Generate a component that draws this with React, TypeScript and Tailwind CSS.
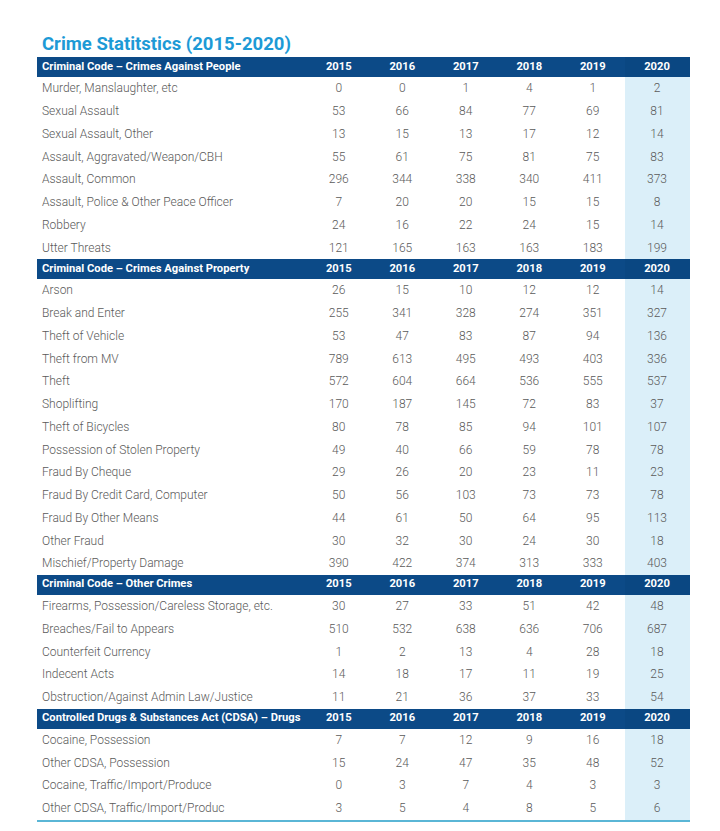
type Row = [string, number[]];
type Section = { title: string; rows: Row[] };

const years = [2015, 2016, 2017, 2018, 2019, 2020];

const sections: Section[] = [
  {
    title: "Criminal Code – Crimes Against People",
    rows: [
      ["Murder, Manslaughter, etc", [0, 0, 1, 4, 1, 2]],
      ["Sexual Assault", [53, 66, 84, 77, 69, 81]],
      ["Sexual Assault, Other", [13, 15, 13, 17, 12, 14]],
      ["Assault, Aggravated/Weapon/CBH", [55, 61, 75, 81, 75, 83]],
      ["Assault, Common", [296, 344, 338, 340, 411, 373]],
      ["Assault, Police & Other Peace Officer", [7, 20, 20, 15, 15, 8]],
      ["Robbery", [24, 16, 22, 24, 15, 14]],
      ["Utter Threats", [121, 165, 163, 163, 183, 199]],
    ],
  },
  {
    title: "Criminal Code – Crimes Against Property",
    rows: [
      ["Arson", [26, 15, 10, 12, 12, 14]],
      ["Break and Enter", [255, 341, 328, 274, 351, 327]],
      ["Theft of Vehicle", [53, 47, 83, 87, 94, 136]],
      ["Theft from MV", [789, 613, 495, 493, 403, 336]],
      ["Theft", [572, 604, 664, 536, 555, 537]],
      ["Shoplifting", [170, 187, 145, 72, 83, 37]],
      ["Theft of Bicycles", [80, 78, 85, 94, 101, 107]],
      ["Possession of Stolen Property", [49, 40, 66, 59, 78, 78]],
      ["Fraud By Cheque", [29, 26, 20, 23, 11, 23]],
      ["Fraud By Credit Card, Computer", [50, 56, 103, 73, 73, 78]],
      ["Fraud By Other Means", [44, 61, 50, 64, 95, 113]],
      ["Other Fraud", [30, 32, 30, 24, 30, 18]],
      ["Mischief/Property Damage", [390, 422, 374, 313, 333, 403]],
    ],
  },
  {
    title: "Criminal Code – Other Crimes",
    rows: [
      ["Firearms, Possession/Careless Storage, etc.", [30, 27, 33, 51, 42, 48]],
      ["Breaches/Fail to Appears", [510, 532, 638, 636, 706, 687]],
      ["Counterfeit Currency", [1, 2, 13, 4, 28, 18]],
      ["Indecent Acts", [14, 18, 17, 11, 19, 25]],
      ["Obstruction/Against Admin Law/Justice", [11, 21, 36, 37, 33, 54]],
    ],
  },
  {
    title: "Controlled Drugs & Substances Act (CDSA) – Drugs",
    rows: [
      ["Cocaine, Possession", [7, 7, 12, 9, 16, 18]],
      ["Other CDSA, Possession", [15, 24, 47, 35, 48, 52]],
      ["Cocaine, Traffic/Import/Produce", [0, 3, 7, 4, 3, 3]],
      ["Other CDSA, Traffic/Import/Produc", [3, 5, 4, 8, 5, 6]],
    ],
  },
];

// label column + six year columns
const grid = "grid grid-cols-[270px_63.5px_63.5px_63.5px_63.5px_63.5px_65px]";

function SectionBlock({ section }: { section: Section }) {
  return (
    <div>
      {/* navy header band */}
      <div className={`${grid} h-5 items-stretch bg-[#0c4a87] text-white font-bold text-[11.2px]`}>
        <div className="flex items-center pl-[5px] whitespace-nowrap">{section.title}</div>
        {years.map((y) => (
          <div
            key={y}
            className={`flex items-center justify-center ${y === 2020 ? "bg-[#0a4782]" : ""}`}
          >
            {y}
          </div>
        ))}
      </div>
      {section.rows.map(([label, vals]) => (
        <div
          key={label}
          className={`${grid} h-[22.75px] items-stretch text-[12px] font-light text-[#5a5a5a]`}
        >
          <div className="flex items-center pl-[5px] whitespace-nowrap">{label}</div>
          {vals.map((v, i) => (
            <div
              key={i}
              className={`flex items-center justify-center ${i === 5 ? "bg-[#dbeff9]" : ""}`}
            >
              {v}
            </div>
          ))}
        </div>
      ))}
    </div>
  );
}

export default function App() {
  return (
    <div className="w-[720px] h-[831px] bg-white font-['Roboto',sans-serif] pl-[37px] pt-[31px]">
      <h1 className="pl-[5px] text-[18.5px] font-bold leading-[26px] text-[#1d9ad6]">
        Crime Statitstics (2015-2020)
      </h1>
      <div className="w-[652.5px]">
        {sections.map((s) => (
          <SectionBlock key={s.title} section={s} />
        ))}
        <div className="h-[2px] bg-[#5ab6d6]" />
      </div>
    </div>
  );
}
